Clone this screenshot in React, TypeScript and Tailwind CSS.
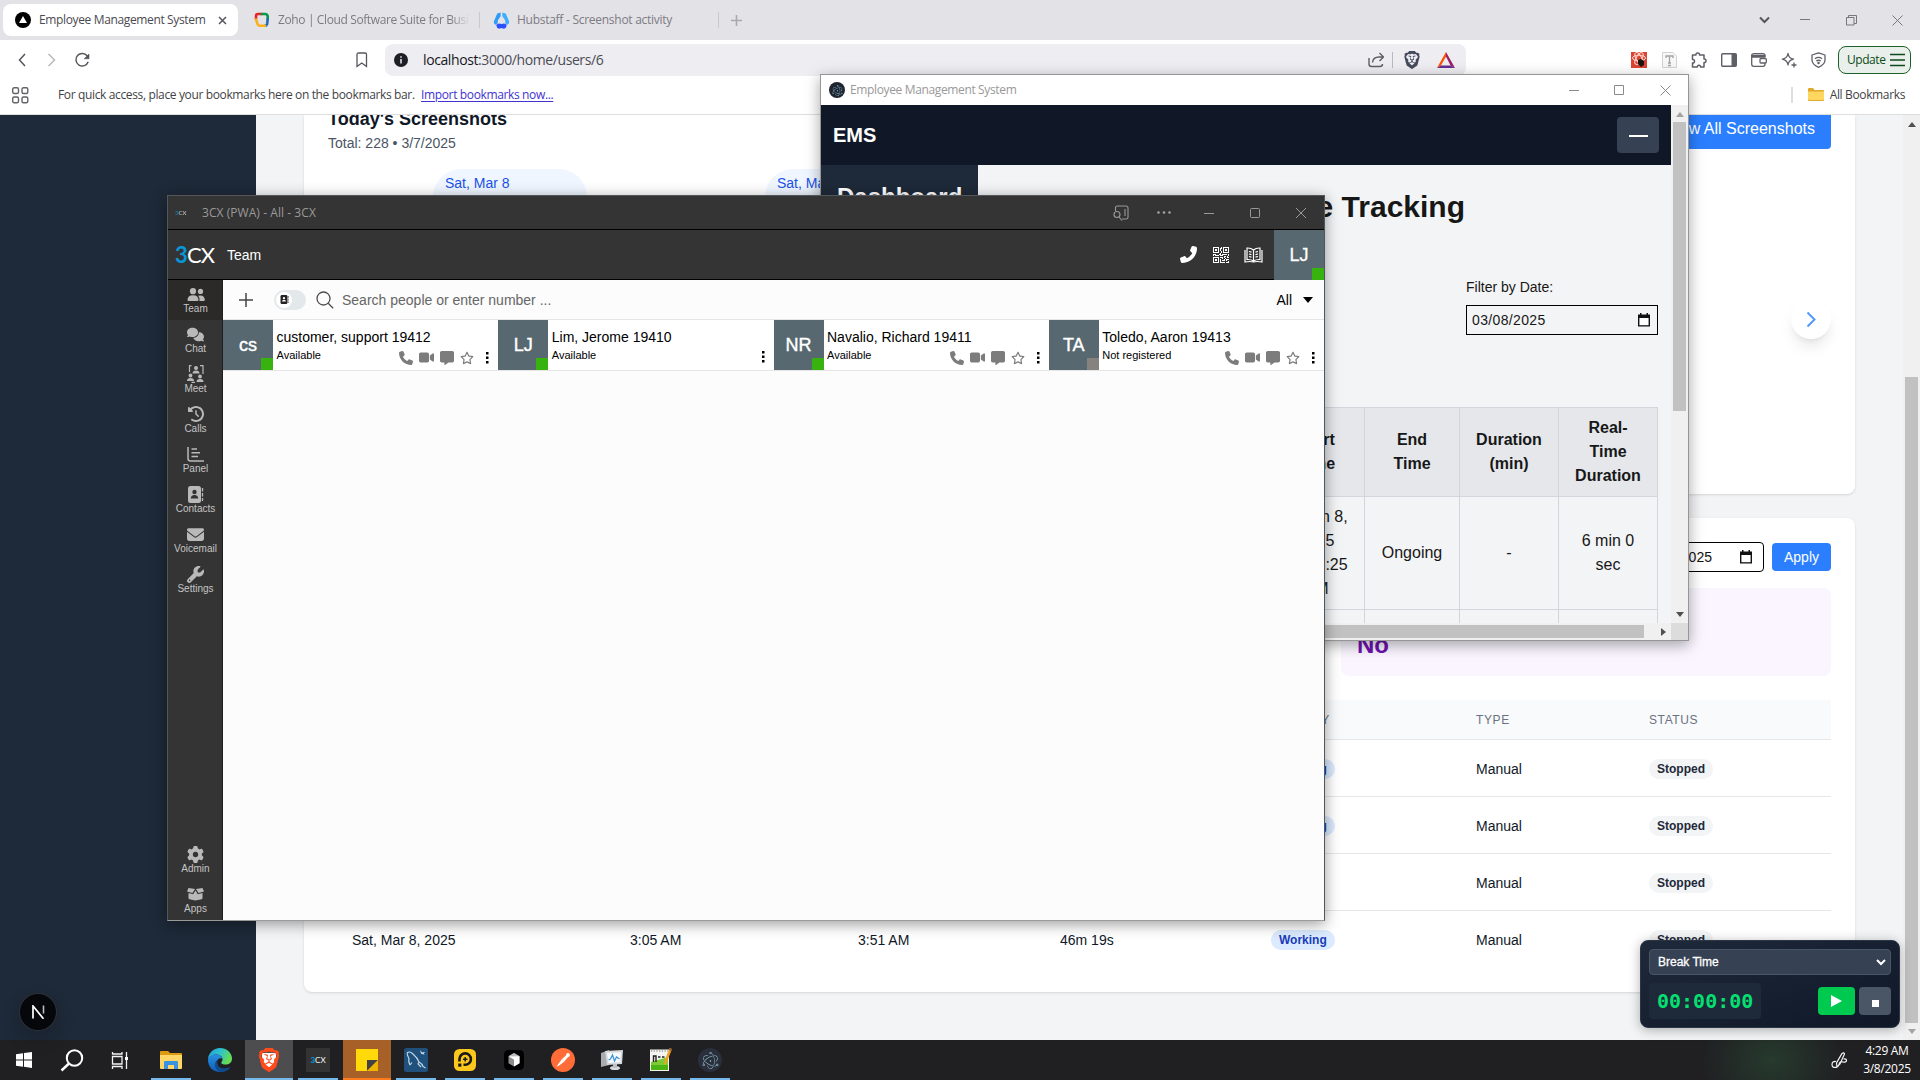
import React from "react";
import {
  FaComments, FaClockRotateLeft, FaEnvelope, FaWrench, FaGear,
  FaPhone, FaVideo, FaMessage, FaRegStar,
} from "react-icons/fa6";
import { BsQrCode } from "react-icons/bs";
import { SiBrave, SiElectron } from "react-icons/si";

const seg = "font-['Open_Sans','Noto_Sans',sans-serif]";

/* ---------- browser chrome ---------- */

function TabBar() {
  return (
    <div className={`flex h-10 shrink-0 items-center bg-[#e3e2e7] pl-[3px] text-[12px] ${seg}`}>
      <div className="flex h-8 w-[235px] items-center rounded-lg bg-white">
        <svg className="ml-3 shrink-0" width="16" height="16" viewBox="0 0 16 16">
          <circle cx="8" cy="8" r="8" fill="#000" />
          <path d="M8 4l4 7H4z" fill="#fff" />
        </svg>
        <span className="ml-2 w-[173px] whitespace-nowrap tracking-[-0.36px] text-[#4a4a50]">Employee Management System</span>
        <svg className="ml-1.5" width="9" height="9" viewBox="0 0 9 9" stroke="#55555b" strokeWidth="1.500">
          <path d="M1 1l7 7M8 1l-7 7" />
        </svg>
      </div>
      <div className="flex h-8 w-[241px] items-center pl-4">
        <svg className="shrink-0" width="16" height="16" viewBox="0 0 16 16" fill="none" strokeWidth="2.600" strokeLinecap="round">
          <path d="M2 7V4q0-2 2-2h4" stroke="#e42527" />
          <path d="M8 2h3q2.500 0 2.700 2.500V7" stroke="#089949" />
          <path d="M13.700 7l-.5 4.500q-.3 2-2.200 2.200" stroke="#226db4" />
          <path d="M11 13.800H6q-2 0-2.500-2L2 7.500" stroke="#f9b21d" />
        </svg>
        <span className="ml-2 w-[192px] overflow-hidden whitespace-nowrap tracking-[-0.38px] text-[#7c7b82] [mask-image:linear-gradient(90deg,#000_90%,transparent_100%)]">Zoho | Cloud Software Suite for Busi</span>
      </div>
      <div className="h-4 w-px bg-[#c9c8cd]" />
      <div className="flex h-8 w-[238px] items-center pl-[13px]">
        <svg width="17" height="17" viewBox="0 0 16 16">
          <path d="M7.200.5L4 1.500 1 8.500q-.8 2.500 1.500 3.500l2-1.500Q4 9 5 7l2.200-3z" fill="#2f9bf8" />
          <path d="M8.800.5L12 1.500l3 7q.8 2.500-1.500 3.500l-2-1.500Q12 9 11 7L8.800 4z" fill="#3fadff" />
          <path d="M3 12l2.500-1.200q2.500.9 5 0L13 12l-1 3-2 .8-2-.8-2 .8-2-.8z" fill="#2b50ff" />
        </svg>
        <span className="ml-[7px] whitespace-nowrap tracking-[-0.27px] text-[#7c7b82]">Hubstaff - Screenshot activity</span>
      </div>
      <div className="h-4 w-px bg-[#c9c8cd]" />
      <svg className="ml-[12px]" width="11" height="11" viewBox="0 0 11 11" stroke="#aaa9ae" strokeWidth="1.600">
        <path d="M5.500 0v11M0 5.500h11" />
      </svg>
      <div className="ml-auto flex items-center">
        <svg className="mr-[30px]" width="11" height="8" viewBox="0 0 11 8" fill="none" stroke="#55555b" strokeWidth="2">
          <path d="M1 1.500l4.500 4.500L10 1.500" />
        </svg>
        <svg className="mr-[36px]" width="10" height="10" stroke="#77767c"><path d="M0 4.500h10" /></svg>
        <svg className="mr-[35px]" width="11" height="11" fill="none" stroke="#77767c">
          <path d="M.5 2.500h7.500v7.500H.5zM2.500 2.500v-2h8v8h-2.500" />
        </svg>
        <svg className="mr-[17px]" width="11" height="11" stroke="#77767c"><path d="M.5.5l10 10M10.500.5l-10 10" /></svg>
      </div>
    </div>
  );
}

function AddressRow() {
  return (
    <div className={`flex h-10 shrink-0 items-center bg-white ${seg}`}>
      <svg className="ml-[18px]" width="8" height="14" fill="none" stroke="#55565c" strokeWidth="1.500"><path d="M7 1L1.500 7 7 13" /></svg>
      <svg className="ml-[21px]" width="9" height="14" fill="none" stroke="#b9b9be" strokeWidth="1.500"><path d="M1.500 1L7.500 7l-6 6" /></svg>
      <svg className="ml-[18px]" width="17" height="16" viewBox="0 0 17 16" fill="none" stroke="#55565c" strokeWidth="1.500">
        <path d="M13.500 4.200A6.300 6.300 0 1 0 14.200 9.800" />
        <path d="M15 2v4.800h-4.800z" fill="#55565c" strokeWidth=".6" />
      </svg>
      <svg className="ml-[265px]" width="12" height="16" fill="none" stroke="#55565c" strokeWidth="1.300">
        <path d="M1 2.500q0-1.500 1.500-1.500h6.500q1.500 0 1.500 1.500V14.500L5.750 11 1 14.500z" />
      </svg>
      <div className="ml-[17px] flex h-8 w-[1081px] items-center rounded-lg bg-[#eeedf2] pl-[9px] text-[14px]">
        <svg width="14" height="14" viewBox="0 0 14 14">
          <circle cx="7" cy="7" r="7" fill="#1d1e26" />
          <path d="M7 6v4.500M7 3.300v1.500" stroke="#eeedf2" strokeWidth="1.500" />
        </svg>
        <span className="ml-[15px] pb-px whitespace-nowrap tracking-[-0.4px] text-[#4b4c54]"><span className="text-[#17181d]">localhost</span>:3000/home/users/6</span>
        <svg className="ml-auto" width="16" height="16" viewBox="0 0 16 16" fill="none" stroke="#5d5e66" strokeWidth="1.400">
          <path d="M1 6v6q0 2.500 2.500 2.500h8.500q2.500 0 2.500-2.500M4.500 10.500Q5 5 11 5h4M11.500 1l4 4-4 4" />
        </svg>
        <div className="ml-2 h-4 w-px bg-[#b8b8bf]" />
        <SiBrave className="ml-[10px] text-[#454a5e]" size={18} />
        <svg className="ml-[16px] mr-[11px]" width="18" height="16" viewBox="0 0 18 16">
          <path d="M9 0L0 16l4-2.500L9 4.500z" fill="#ff5000" />
          <path d="M9 0l9 16-4.500-2.500L9 4.500z" fill="#9e1f63" />
          <path d="M0 16l4-2.500h9.500L18 16z" fill="#662d91" />
        </svg>
      </div>
      <div className="ml-auto flex items-center gap-[14px] pr-[9px] text-[#5f6067]">
        <svg className="mr-px ml-[-1px]" width="16" height="16" viewBox="0 0 16 16">
          <path d="M0 0h16v16H0z" fill="#db4433" />
          <g fill="none" stroke="#ffd9d2" strokeWidth="1"><ellipse cx="8" cy="6" rx="6.500" ry="2.800" /><ellipse cx="8" cy="6.500" rx="6.500" ry="2.800" transform="rotate(60 8 6.500)" /><ellipse cx="8" cy="6.500" rx="6.500" ry="2.800" transform="rotate(-60 8 6.500)" /></g>
          <path d="M7 8l3-1 3 2v4l-3 2-3-3z" fill="#1d1414" />
        </svg>
        <svg width="15" height="16" viewBox="0 0 15 16" fill="none" stroke="#d2d2d5">
          <path d="M.5.500h10.500l3.500 3.500v11.500H.5z" fill="#f7f7f7" />
          <path d="M4 6V4h7v2M7.500 4v7M6 11h3M6 13.500h3" stroke="#a2a2a6" strokeWidth="1.300" />
        </svg>
        <svg width="16" height="16" viewBox="0 0 16 16" fill="none" stroke="currentColor" strokeWidth="1.500" strokeLinejoin="round">
          <path d="M1.500 3H5q-.3-2 1.700-2T8.500 3H13v4q2-.2 2 1.700T13 10.500V15H9.500q.2-1.700-1.500-1.700T6.300 15H1.500v-4q2 .1 2-1.800T1.500 7.500z" />
        </svg>
        <svg width="16" height="14" viewBox="0 0 16 14"><rect x=".7" y=".7" width="14.600" height="12.600" rx="1" fill="none" stroke="currentColor" strokeWidth="1.400" /><path d="M10.500 1h4.500v12h-4.500z" fill="currentColor" /></svg>
        <svg width="16" height="14" viewBox="0 0 16 14" fill="none" stroke="currentColor" strokeWidth="1.300">
          <path d="M14 4V2.500Q14 .7 12 .7H3Q.7.700.7 2.500V11q0 2.300 2 2.300h9.300q2 0 2-2V10" />
          <path d="M.7 2.500h13v1.500H.7z" fill="currentColor" />
          <rect x="9" y="5.500" width="6.300" height="4.500" rx="1" />
        </svg>
        <svg width="16" height="16" viewBox="0 0 16 16" fill="none" stroke="currentColor" strokeWidth="1.300" strokeLinejoin="round">
          <path d="M7 1.500q.7 4.800 5.500 5.700Q7.700 8.100 7 13 6.200 8.100 1.300 7.200 6.200 6.300 7 1.500zM13 10.500v5M10.500 13h5" />
        </svg>
        <svg width="15" height="16" viewBox="0 0 15 16" fill="none" stroke="currentColor" strokeWidth="1.300" strokeLinejoin="round">
          <path d="M7.500.8L14 3v5q0 4.500-6.500 7.300Q1 12.500 1 8V3z" />
          <path d="M4 6.700q3.500-2.500 7 0M5.300 9q2.200-1.500 4.400 0" /><circle cx="7.500" cy="11" r=".6" />
        </svg>
        <div className="ml-[-2px] flex h-7 w-[73px] items-center rounded-lg border border-[#1c6128] bg-[#e9f0eb] pl-2 text-[12px] text-[#0c4a18]">
          <span className="w-[43px] tracking-[-0.45px]">Update</span>
          <svg width="15" height="14" stroke="#0c4a18" strokeWidth="1.600"><path d="M0 1.500h15M0 7h15M0 12.500h15" /></svg>
        </div>
      </div>
    </div>
  );
}

function BookmarksRow() {
  return (
    <div className={`flex h-[35px] shrink-0 items-center border-b border-[#dededf] bg-white pb-1 text-[12px] ${seg}`}>
      <svg className="ml-3 shrink-0" width="17" height="17" fill="none" stroke="#626267" strokeWidth="1.400">
        <rect x=".7" y=".7" width="5.800" height="5.800" rx="1.500" /><rect x="10" y=".7" width="5.800" height="5.800" rx="1.500" />
        <rect x=".7" y="10" width="5.800" height="5.800" rx="1.500" /><rect x="10" y="10" width="5.800" height="5.800" rx="1.500" />
      </svg>
      <span className="ml-[29px] w-[363px] whitespace-nowrap tracking-[-0.36px] text-[#3f3f45]">For quick access, place your bookmarks here on the bookmarks bar.</span>
      <span className="whitespace-nowrap tracking-[-0.36px] text-[#4133d1] underline underline-offset-2">Import bookmarks now...</span>
      <div className="ml-auto h-4 w-0.5 bg-[#dedee2]" />
      <svg className="ml-[15px]" width="16" height="14" viewBox="0 0 16 14">
        <path d="M0 1q0-1 1-1h4l1.500 2H15q1 0 1 1v9q0 1-1 1H1q-1 0-1-1z" fill="#e0a82c" />
        <path d="M0 3.500h16V11q0 1-1 1H1q-1 0-1-1z" fill="#ffd75e" />
      </svg>
      <span className="ml-1.5 mr-[15px] whitespace-nowrap tracking-[-0.36px] text-[#3f3f45]">All Bookmarks</span>
    </div>
  );
}

/* ---------- web page ---------- */

const COLS = "grid grid-cols-[278px_228px_202px_211px_205px_173px_206px]";

function Row({ start, end, dur, working }: { start: string; end: string; dur: string; working: boolean }) {
  return (
    <div className={`${COLS} h-[57px] items-center border-b border-gray-200 pt-0.5 text-sm text-[#101828] last:border-b-0 last:pt-px [&>div]:px-6`}>
      <div>Sat, Mar 8, 2025</div>
      <div>{start}</div>
      <div>{end}</div>
      <div>{dur}</div>
      <div className="flex">{working && <span className="rounded-full bg-[#dbeafe] px-2 text-xs leading-5 font-bold text-[#193cb8]">Working</span>}</div>
      <div>Manual</div>
      <div className="flex"><span className="rounded-full bg-gray-100 px-2 text-xs leading-5 font-bold text-[#1e2939]">Stopped</span></div>
    </div>
  );
}

function CalendarIcon() {
  return (
    <svg width="12" height="14" viewBox="0 0 12 14">
      <path d="M2 0h1.500v1.500h5V0H10v1.500h2V13.500H0V1.500h2z" fill="#111" />
      <path d="M1.400 5h9.200v7.200H1.400z" fill="#fff" />
    </svg>
  );
}

function DatePill() {
  return <div className="h-[120px] w-[154px] rounded-[28px] bg-[#eff6ff] px-3 pt-1 text-sm text-[#1a51e8]">Sat, Mar 8</div>;
}

function WebPage() {
  return (
    <div className="flex h-[925px] shrink-0 overflow-hidden">
      <div className="w-64 shrink-0 bg-[#1e2939]" />
      <div className="flex flex-1 flex-col gap-6 bg-[#f3f4f6] px-12">
        <div className="flex h-[379px] shrink-0 flex-col rounded-b-lg bg-white px-6 shadow-sm">
          <div className="flex h-[37px] items-start justify-between">
            <div className="mt-[-10px]">
              <div className="text-lg leading-7 font-bold text-[#101828]">Today's Screenshots</div>
              <div className="mt-px text-sm leading-[18px] text-[#4a5565]">Total: 228 • 3/7/2025</div>
            </div>
            <div className="mt-[-7px] flex h-[41px] items-center rounded bg-[#2b7fff] px-4 text-white">View All Screenshots</div>
          </div>
          <div className="mt-[17px] flex">
            <div className="flex gap-[178px] pl-[105px]"><DatePill /><DatePill /></div>
            <div className="mt-[130px] ml-auto flex size-10 items-center justify-center rounded-full bg-white shadow-lg">
              <svg width="11" height="17" fill="none" stroke="#5598fb" strokeWidth="2"><path d="M1.500 1.500l7 7-7 7" /></svg>
            </div>
          </div>
        </div>
        <div className="flex h-[474px] shrink-0 flex-col rounded-lg bg-white p-6 shadow-sm">
          <div className="flex h-[30px] items-center justify-end gap-2">
            <div className="flex h-[30px] w-[140px] items-center justify-end rounded border border-black pr-[11px] text-sm text-[#111]">
              <span className="mr-[28px]">03/08/2025</span>
              <CalendarIcon />
            </div>
            <div className="flex h-7 items-center rounded bg-[#2b7fff] px-3 text-sm text-white">Apply</div>
          </div>
          <div className="mt-4 mb-6 flex justify-end">
            <div className="h-[88px] w-[490px] rounded-lg bg-[#faf5ff] p-4 pt-[41px] text-2xl font-bold text-[#6e11b0]">No</div>
          </div>
          <div className={`${COLS} h-[41px] items-center border-b border-gray-200 bg-gray-50 text-xs tracking-wider text-[#6a7282] [&>div]:px-6`}>
            <div>DATE</div><div>START</div><div>END</div><div>DURATION</div><div>ACTIVITY</div><div>TYPE</div><div>STATUS</div>
          </div>
          <div>
            <Row start="4:23 AM" end="4:25 AM" dur="2m 0s" working />
            <Row start="4:10 AM" end="4:23 AM" dur="13m 0s" working />
            <Row start="3:51 AM" end="4:10 AM" dur="19m 0s" working={false} />
            <Row start="3:05 AM" end="3:51 AM" dur="46m 19s" working />
          </div>
        </div>
      </div>
      <div className="flex w-[17px] shrink-0 flex-col items-center bg-[#f0f0f0]">
        <svg className="mt-[7px]" width="8" height="5"><path d="M0 5l4-5 4 5z" fill="#505050" /></svg>
        <div className="mt-[250px] h-[646px] w-[13px] bg-[#c1c1c1]" />
        <svg className="mt-[6px]" width="8" height="5"><path d="M0 0l4 5 4-5z" fill="#a3a3a3" /></svg>
      </div>
    </div>
  );
}

/* ---------- EMS window ---------- */

function EmsWindow() {
  const th = "border border-[#d1d5dc] p-0 font-bold";
  const td = "border border-[#d1d5dc] p-0";
  return (
    <div className="absolute top-[74px] left-[820px] flex h-[567px] w-[869px] flex-col border border-[#969696] bg-[#f3f4f6] shadow-[0_4px_14px_rgba(0,0,0,0.35)]">
      <div className={`flex h-[30px] shrink-0 items-center bg-white text-[12px] text-[#999] ${seg}`}>
        <div className="ml-2 flex size-4 items-center justify-center rounded-full bg-[#1f2430]"><SiElectron size={11} className="text-[#9feaf9]" /></div>
        <span className="ml-[5px] whitespace-nowrap tracking-[-0.36px]">Employee Management System</span>
        <svg className="ml-auto" width="10" height="10" stroke="#8a8a8a"><path d="M0 5.500h10" /></svg>
        <svg className="ml-[35px]" width="10" height="10" fill="none" stroke="#8a8a8a"><path d="M.5.500h9v9h-9z" /></svg>
        <svg className="mr-[17px] ml-[36px]" width="11" height="11" stroke="#8a8a8a"><path d="M.5.5l10 10M10.500.5l-10 10" /></svg>
      </div>
      <div className="flex h-[518px]">
        <div className="flex w-[850px] flex-col overflow-hidden">
          <div className="flex h-[60px] shrink-0 items-center justify-between bg-[#101828] pr-3 pl-3 text-xl font-bold text-white">
            <span>EMS</span>
            <div className="flex h-9 w-[42px] items-center justify-center rounded bg-[#364153]"><div className="mt-0.5 h-0.5 w-[19px] bg-white" /></div>
          </div>
          <div className="flex h-[458px] overflow-hidden">
            <div className="w-[157px] shrink-0 bg-[#1e2939] pt-4 pl-4 text-2xl font-bold text-white">Dashboard</div>
            <div className="flex flex-1 flex-col items-end overflow-hidden pr-[13px] text-[#171717]">
              <div className="mt-[24px] mr-[193px] text-[30px] leading-9 font-bold">Time Tracking</div>
              <div className="mt-[52px] w-[192px] text-sm">Filter by Date:</div>
              <div className="mt-2 flex h-[30px] w-[192px] shrink-0 items-center justify-between border border-black pr-[7px] pl-[5px] text-sm">
                <span className="tracking-[0.35px]">03/08/2025</span><CalendarIcon />
              </div>
              <table className="mt-[72px] w-[390px] shrink-0 table-fixed border-collapse text-center text-base leading-6">
                <colgroup><col className="w-[96px]" /><col className="w-[95px]" /><col className="w-[99px]" /><col className="w-[99px]" /></colgroup>
                <thead>
                  <tr className="h-[89px] bg-[#e5e7eb]">
                    <th className={th}>Start<br />Time</th><th className={th}>End<br />Time</th><th className={th}>Duration<br />(min)</th><th className={th}>Real-<br />Time<br />Duration</th>
                  </tr>
                </thead>
                <tbody>
                  <tr className="h-[113px]">
                    <td className={td}>March 8,<br />2025<br />04:23:25<br />AM</td><td className={td}>Ongoing</td><td className={td}>-</td><td className={td}>6 min 0<br />sec</td>
                  </tr>
                  <tr className="h-[113px]"><td className={td} /><td className={td} /><td className={td} /><td className={td} /></tr>
                </tbody>
              </table>
            </div>
          </div>
        </div>
        <div className="flex w-[17px] flex-col items-center bg-[#f0f0f0]">
          <svg className="mt-[7px]" width="8" height="5"><path d="M0 5l4-5 4 5z" fill="#a3a3a3" /></svg>
          <div className="mt-[5px] h-[289px] w-[13px] bg-[#c1c1c1]" />
          <svg className="mt-auto mb-[6px]" width="8" height="5"><path d="M0 0l4 5 4-5z" fill="#505050" /></svg>
        </div>
      </div>
      <div className="flex h-[17px] items-center bg-[#f0f0f0]">
        <div className="ml-[17px] h-[13px] w-[806px] bg-[#c1c1c1]" />
        <svg className="ml-[17px]" width="5" height="8"><path d="M0 0l5 4-5 4z" fill="#505050" /></svg>
        <div className="ml-auto h-[17px] w-[17px] bg-[#dcdcdc]" />
      </div>
    </div>
  );
}

/* ---------- 3CX window ---------- */

function CxLogo({ className }: { className: string }) {
  return (
    <span className={`font-['Lato',sans-serif] whitespace-nowrap text-white ${className}`}>
      <b className="text-[#0896d7]">3</b>CX
    </span>
  );
}

function TeamIcon() {
  return (
    <svg width="18" height="13" viewBox="0 0 18 13" fill="#b9b9b9">
      <circle cx="6" cy="3.200" r="3.100" /><circle cx="13.500" cy="3.400" r="2.600" />
      <path d="M.5 12q0-4.700 5.500-4.700t5.500 4.700q0 1-1 1H1.500q-1 0-1-1zM12.500 13q.6-3.300-1.300-5.300 6.300-1.400 6.600 4.300 0 1-1 1z" />
    </svg>
  );
}
function MeetIcon() {
  return (
    <svg width="17" height="18" viewBox="0 0 17 18" fill="#b9b9b9">
      <circle cx="9" cy="3" r="2" /><path d="M5.500 8.500q0-3 3.500-3t3.500 3z" />
      <circle cx="3.500" cy="10.500" r="1.900" /><path d="M0 16q0-3 3.500-3T7 16z" />
      <circle cx="13" cy="11.500" r="1.900" /><path d="M9.500 17q0-3 3.500-3t3.500 3z" />
      <path d="M4.500.7H2.500V7M13 .7h3V9M4.500 17.300h3.500" fill="none" stroke="#b9b9b9" strokeWidth="1.200" />
    </svg>
  );
}
function PanelIcon() {
  return (
    <svg width="17" height="15" viewBox="0 0 17 15" fill="none" stroke="#b9b9b9" strokeWidth="1.500">
      <path d="M1 0v11.500q0 2.500 2.500 2.500H17M4.500 2h5.500M4.500 5.700h8.500M4.500 9.400h6.500" />
    </svg>
  );
}
function ContactsIcon({ color = "#b9b9b9", dark = "#333", size = 17 }: { color?: string; dark?: string; size?: number }) {
  return (
    <svg width={size} height={size} viewBox="0 0 17 17">
      <rect x="1" width="13" height="17" rx="2.500" fill={color} />
      <path d="M15.500 2v3.500M15.500 7v3.500M15.500 12v3" stroke={color} strokeWidth="1.300" />
      <circle cx="7.500" cy="6" r="2.200" fill={dark} /><path d="M3.800 12.500q0-3.500 3.700-3.500t3.700 3.500z" fill={dark} />
    </svg>
  );
}
function AppsIcon() {
  return (
    <svg width="17" height="14" viewBox="0 0 17 14" fill="#b9b9b9">
      <path d="M1.500 1L8 2 5.500 6 0 4.500zM15.500 1L9 2l2.500 4L17 4.500z" />
      <path d="M1.500 6l4.700 1.200L8.500 3.500l2.300 3.700L15.500 6v5q0 1-1 1.300L8.500 13.500 2.500 12.300q-1-.3-1-1.300z" />
    </svg>
  );
}

function NavItem({ icon, label, active }: { icon: React.ReactNode; label: string; active?: boolean }) {
  return (
    <div className={`flex h-10 flex-col items-center pl-px text-[#b9b9b9] ${active ? "bg-[#2b2a29]" : ""}`}>
      <div className="mt-[5px] flex h-[18px] items-center">{icon}</div>
      <div className="text-[10px] leading-3 text-[#c4c4c4]">{label}</div>
    </div>
  );
}

function Person({ initials, name, status, icons, grey }: { initials: string; name: string; status: string; icons: boolean; grey?: boolean }) {
  return (
    <div className="flex h-[50px] flex-1 bg-white">
      <div className="relative flex size-[50px] items-center justify-center bg-[#586870] text-[18px] text-white [-webkit-text-stroke:0.4px_white]">
        {initials}
        <div className={`absolute right-0 bottom-0 size-3 ${grey ? "bg-[#858280]" : "bg-[#38b20f]"}`} />
      </div>
      <div className="flex flex-1 flex-col pl-[3.5px] text-black">
        <div className="mt-[7px] text-sm leading-5">{name}</div>
        <div className="flex items-start justify-between text-[11px] leading-4">
          <span>{status}</span>
          <div className="flex items-center gap-[6px] pt-[3px] pr-[9px] text-[#7c7c7c]">
            {icons && (
              <>
                <FaPhone size={14} /><FaVideo size={15} /><FaMessage size={14} /><FaRegStar size={14} className="mr-[5px]" />
              </>
            )}
            <svg width="4" height="13" fill="#000"><path d="M1 1h2.500v2.500H1zM1 5.500h2.500V8H1zM1 10h2.500v2.500H1z" /></svg>
          </div>
        </div>
      </div>
    </div>
  );
}

function CxWindow() {
  return (
    <div className="absolute top-[195px] left-[167px] flex h-[726px] w-[1158px] flex-col border border-[#53575b] border-b-[#9a9c9a] bg-[#fcfcfc] shadow-[0_3px_14px_rgba(0,0,0,0.4)]">
      <div className={`flex h-[34px] shrink-0 items-center border-b border-black bg-[#343434] text-[12px] text-[#9a9a9a] ${seg}`}>
        <CxLogo className="ml-[7px] w-[27px] text-[6px] opacity-70" />
        <span className="whitespace-nowrap tracking-[0.06px]">3CX (PWA) - All - 3CX</span>
        <svg className="ml-auto" width="16" height="16" viewBox="0 0 16 16" fill="none" stroke="#999" strokeWidth="1.100">
          <path d="M2.500 6V3q0-2 2-2H13q2 0 2 2v9.500q0 1.500-2 1.500H9M12 4v7" /><circle cx="4" cy="9.500" r="3" /><path d="M6 12l3 3.500" />
        </svg>
        <svg className="ml-[28px]" width="14" height="3" fill="#aaa"><circle cx="1.500" cy="1.500" r="1.200" /><circle cx="7" cy="1.500" r="1.200" /><circle cx="12.500" cy="1.500" r="1.200" /></svg>
        <svg className="ml-[33px]" width="10" height="10" stroke="#999"><path d="M0 5.500h10" /></svg>
        <svg className="ml-[36px]" width="10" height="10" fill="none" stroke="#999"><rect x=".5" y=".5" width="9" height="9" rx="1" /></svg>
        <svg className="mr-[18px] ml-[36px]" width="10" height="10" stroke="#999"><path d="M0 0l10 10M10 0L0 10" /></svg>
      </div>
      <div className="flex h-[50px] shrink-0 items-center border-b border-black bg-[#343434] text-white">
        <CxLogo className="ml-[7px] w-[52px] text-[22px] tracking-[-0.9px]" />
        <span className="text-sm">Team</span>
        <FaPhone className="ml-auto -scale-x-100" size={17} />
        <BsQrCode className="ml-[16px]" size={16} />
        <svg className="mr-[11px] ml-[15px]" width="19" height="16" viewBox="0 0 19 16" fill="none" stroke="#fff" strokeWidth="1.200">
          <path d="M9.500 3Q7 .8 3 1v11.500q4-.2 6.500 1.500 2.500-1.700 6.500-1.500V1q-4-.2-6.500 2zM9.500 3v11M1 3v12q5-1 8.500 0 3.500-1 8.500 0V3M5 4.500l2.500.7M5 7l2.500.7M5 9.500l2.500.7M14 4.500l-2.500.7M14 7l-2.500.7M14 9.500l-2.500.7" />
        </svg>
        <div className="relative flex h-[50px] w-[50px] items-center justify-center self-start bg-[#586870] text-[18px] [-webkit-text-stroke:0.3px_white]">
          LJ<div className="absolute right-0 bottom-0 size-3 bg-[#38b20f]" />
        </div>
      </div>
      <div className="flex flex-1">
        <div className="flex w-[55px] flex-col border-r border-[#1f1f1f] bg-[#343434]">
          <NavItem active icon={<TeamIcon />} label="Team" />
          <NavItem icon={<FaComments size={17} />} label="Chat" />
          <NavItem icon={<MeetIcon />} label="Meet" />
          <NavItem icon={<FaClockRotateLeft size={16} />} label="Calls" />
          <NavItem icon={<PanelIcon />} label="Panel" />
          <NavItem icon={<ContactsIcon />} label="Contacts" />
          <NavItem icon={<FaEnvelope size={17} />} label="Voicemail" />
          <NavItem icon={<FaWrench size={17} />} label="Settings" />
          <div className="mt-auto" />
          <NavItem icon={<FaGear size={17} />} label="Admin" />
          <NavItem icon={<AppsIcon />} label="Apps" />
        </div>
        <div className="flex flex-1 flex-col">
          <div className="flex h-10 items-center border-b border-[#e6e6e6] pr-[11px] text-sm">
            <svg className="ml-[16px]" width="14" height="14" stroke="#444" strokeWidth="1.500"><path d="M7 0v14M0 7h14" /></svg>
            <div className="ml-[21px] flex h-5 w-8 items-center rounded-full bg-[#e3e8ea] pl-0.5">
              <div className="flex size-4 items-center justify-center rounded-full bg-white pl-px"><ContactsIcon size={9} color="#222" dark="#fff" /></div>
            </div>
            <svg className="ml-[10px]" width="18" height="18" fill="none" stroke="#4e4e4e" strokeWidth="1.300"><circle cx="7.500" cy="7.500" r="6.500" /><path d="M12.200 12.200l5 5" /></svg>
            <span className="ml-[8px] text-[#666]">Search people or enter number ...</span>
            <span className="ml-auto text-black">All</span>
            <svg className="ml-[11px]" width="10" height="6"><path d="M0 0h10L5 6z" fill="#000" /></svg>
          </div>
          <div className="flex border-b border-[#e6e6e6]">
            <Person initials="cs" name="customer, support 19412" status="Available" icons />
            <Person initials="LJ" name="Lim, Jerome 19410" status="Available" icons={false} />
            <Person initials="NR" name="Navalio, Richard 19411" status="Available" icons />
            <Person initials="TA" name="Toledo, Aaron 19413" status="Not registered" icons grey />
          </div>
        </div>
      </div>
    </div>
  );
}

/* ---------- timer and dev badge ---------- */

function TimerWidget() {
  return (
    <div className="absolute top-[940px] left-[1640px] flex h-[88px] w-[260px] flex-col rounded-lg border border-[#2a3546] bg-linear-to-br from-[#1e2939] to-[#101828] p-2 text-white shadow-[0_2px_12px_rgba(0,0,0,0.3)]">
      <div className="flex h-[26px] items-center justify-between rounded border border-[#4a5565] bg-[#364153] pr-1 pl-2 text-xs [-webkit-text-stroke:0.3px_white]">
        Break Time
        <svg width="10" height="7" fill="none" stroke="#fff" strokeWidth="2"><path d="M1 1l4 4 4-4" /></svg>
      </div>
      <div className="mt-2 flex items-center">
        <div className="flex h-9 w-[112px] items-center rounded bg-[#1e2939] pl-2 font-['DejaVu_Sans_Mono',monospace] text-[20px] font-bold text-[#05df72]">00:00:00</div>
        <div className="ml-auto flex h-7 w-[37px] items-center justify-center rounded bg-[#00c950]"><svg width="11" height="12"><path d="M0 0l11 6-11 6z" fill="#fff" /></svg></div>
        <div className="ml-1 flex h-7 w-8 items-center justify-center rounded bg-[#4a5565]"><div className="mt-1 size-[7px] bg-white" /></div>
      </div>
    </div>
  );
}

function DevBadge() {
  return (
    <div className="absolute top-[994px] left-[20px] flex size-9 items-center justify-center rounded-full bg-[#05070a] shadow-[0_0_0_1px_#2f3237,0_8px_20px_rgba(0,0,0,0.2)]">
      <svg width="13" height="14" viewBox="0 0 13 14" fill="none">
        <path d="M1 13.500V1l10.500 12.800" stroke="#fff" strokeWidth="1.700" /><path d="M11.500 .5v8" stroke="#bbb" strokeWidth="1.600" />
      </svg>
    </div>
  );
}

/* ---------- taskbar ---------- */

const icons: Record<string, React.ReactNode> = {
  explorer: (
    <svg width="22" height="18" viewBox="0 0 22 18">
      <path d="M0 1q0-1 1-1h7l2 2h11q1 0 1 1v14H0z" fill="#dc9a13" /><path d="M0 4h22v13q0 1-1 1H1q-1 0-1-1z" fill="#ffd667" />
      <path d="M4 18v-7q0-1 1-1h12q1 0 1 1v7h-4v-4H8v4z" fill="#3a93dd" />
    </svg>
  ),
  edge: (
    <svg width="24" height="24" viewBox="0 0 24 24">
      <defs>
        <linearGradient id="eg" x1="0" y1="0" x2="1" y2=".4"><stop offset="0" stopColor="#1f9fe0" /><stop offset=".55" stopColor="#2fc3c8" /><stop offset="1" stopColor="#66dd55" /></linearGradient>
        <linearGradient id="eb" x1="0" y1="0" x2="0" y2="1"><stop offset="0" stopColor="#2a8fe0" /><stop offset="1" stopColor="#0c5fb8" /></linearGradient>
      </defs>
      <path d="M0 12C0 5 5.500 0 12 0s12 4.800 12 10.500c0 4-3 6-6.500 6-2.500 0-4.300-.9-4.300-1.800 0-.7 1.300-1.200 1.300-3.500C14.500 8 11 6.500 8 6.500 4 6.500.8 9 0 12z" fill="url(#eg)" />
      <path d="M0 12c.5-3.500 4-5.500 7.500-5.500 4 0 6.800 2 7 4.500-1-1.500-5.500-1.500-5.500 3.500 0 4.500 4.500 9 11.500 6C18 23 15 24 12 24 5 24 0 19 0 12z" fill="url(#eb)" />
      <path d="M9 14.500c0 4.500 5 7.500 12.500 4.800.6-.3.900.2.600.7C20 22.700 16.500 24 13 24 8.500 23 6.500 19 7 16c.2-1.800 1.200-3.600 2.500-4.300C9.100 12.500 9 13.500 9 14.500z" fill="#114a8b" />
    </svg>
  ),
  brave: (
    <div className="relative flex size-6 items-center justify-center">
      <div className="absolute size-[14px] bg-white" />
      <SiBrave className="relative text-[#ff4a1c]" size={24} />
    </div>
  ),
  cx: <div className="flex size-6 items-center justify-center bg-[#333]"><CxLogo className="text-[8px]" /></div>,
  note: <svg width="22" height="22"><path d="M0 0h22v11L11 22H0z" fill="#ffd90a" /><path d="M11 22V11h11z" fill="#424242" /><path d="M11 22L22 11v11z" fill="#f0b400" /></svg>,
  mysql: (
    <svg width="24" height="24" viewBox="0 0 24 24">
      <rect width="24" height="24" rx="2.500" fill="#20517d" />
      <path d="M6 17Q4 13 5 10.500 2.500 6 3.500 4.500 6 3 9 6q4.500 4 6 8 3 1.500 4 4.500l2.500 1.500M6 17l2-2.500M15 14l-1 2 3 3" fill="none" stroke="#c6dbe9" strokeWidth="1.100" />
      <path d="M16 2l2 2.500L21 4l-1.500 2 1.500 1-4-1.500z" fill="#d8e6f0" />
    </svg>
  ),
  yellow: (
    <svg width="22" height="22" viewBox="0 0 22 22">
      <rect width="22" height="22" rx="5.500" fill="#fcc81e" />
      <path d="M5.500 12.500v-2.500a5.700 5.700 0 1 1 5.700 5.800H9.500" fill="none" stroke="#1c1a18" strokeWidth="2.600" /><path d="M4.200 14.500h3.200v3.200H4.200z" fill="#1c1a18" />
      <path d="M11.200 8v4.500M9 10.200h4.500" stroke="#1c1a18" strokeWidth="1.500" />
    </svg>
  ),
  cursor: (
    <svg width="20" height="20" viewBox="0 0 20 20">
      <rect width="20" height="20" rx="4.500" fill="#000" />
      <path d="M10 3l5.500 3.200v7L10 16.500 4.500 13.200v-7z" fill="#8d8d8d" /><path d="M4.500 6.200L10 3l5.500 3.200L10 9.500z" fill="#bbb" /><path d="M15.500 6.200v7L10 16.500V9.500L5 6.500z" fill="#fff" />
    </svg>
  ),
  postman: (
    <svg width="24" height="24" viewBox="0 0 24 24">
      <circle cx="12" cy="12" r="12" fill="#ff6c37" />
      <path d="M5.500 18.500l5.500-7.500 2.500 2.500-6 4.500z" fill="#fff" /><path d="M11 11l4.500-4 1.800 1.800-4 4.700z" fill="#fff" /><circle cx="17" cy="7" r="1.900" fill="#fff" />
    </svg>
  ),
  monitor: (
    <svg width="24" height="22" viewBox="0 0 24 22">
      <path d="M1 4l8-3v15l-8 2z" fill="#a9adb0" /><path d="M5 2l18-1-1 14-15 1z" fill="#d5d8da" /><path d="M7 4l14-.8-.7 10L8.500 14z" fill="#f7fbff" />
      <path d="M8.500 11l2-1 2-4 2 6 2-4 3 2" stroke="#3e95d8" fill="none" strokeWidth="1.300" /><ellipse cx="15" cy="19" rx="5" ry="2" fill="#d9dbdc" /><path d="M13 15h4v4h-4z" fill="#bfc2c4" />
    </svg>
  ),
  editor: (
    <svg width="24" height="24" viewBox="0 0 24 24">
      <path d="M1 1.500h19V23H1z" fill="#f4f4f0" /><path d="M2 14L19 9v13H2z" fill="#7ccb35" /><path d="M2 17h17v5H2z" fill="#4bb414" /><path d="M2 3h17" stroke="#999" strokeDasharray="1.200 1.500" strokeWidth="1.500" />
      <path d="M4.500 14V8h2.500v6M9 9h2.500M13 9h2.500" stroke="#222" strokeWidth="1.400" fill="none" /><path d="M20.500 0l2.500 1-5.500 14-2.500 2 .2-3z" fill="#f0a024" /><path d="M20.500 0L23 1l-.8 2-2.400-1z" fill="#8d5a34" />
    </svg>
  ),
  electron: <div className="flex size-6 items-center justify-center rounded-full bg-[#2b2e3b]"><SiElectron size={17} className="text-[#9fd6e3]" /></div>,
};

function Taskbar() {
  const apps: [string, string][] = [
    ["explorer", ""], ["edge", "none"], ["brave", "active"], ["cx", ""], ["note", "note"], ["mysql", ""],
    ["yellow", ""], ["cursor", ""], ["postman", ""], ["monitor", ""], ["editor", ""], ["electron", ""],
  ];
  return (
    <div className="flex h-10 shrink-0 items-center bg-[#202023] bg-[radial-gradient(ellipse_70px_60px_at_1772px_20px,#263a2d,transparent)]">
      <svg className="ml-4" width="16" height="16" fill="#fff"><path d="M0 2.200l7-1v6.300H0zM8 1l8-1v7.500H8zM0 8.500h7v6.300l-7-1zM8 8.500h8V16l-8-1.200z" /></svg>
      <svg className="ml-[28px]" width="24" height="24" fill="none" stroke="#fff" strokeWidth="2"><circle cx="14.500" cy="10" r="7.700" /><path d="M9 15.500L1.500 22.500" strokeWidth="2.400" /></svg>
      <svg className="ml-[27px]" width="18" height="17" fill="none" stroke="#f2f2f2" strokeWidth="1.300">
        <path d="M1.500 4.500h9.500v7.500H1.500zM1.500 0v2h9.500V0M1.500 17v-2.500h9.500V17M15.500 0v17" /><path d="M14 5h3v3h-3z" fill="#fff" stroke="none" />
      </svg>
      <div className="ml-[18px] flex">
        {apps.map(([k, s]) => (
          <div key={k} className={`mr-px flex h-10 w-12 shrink-0 flex-col items-center ${s === "active" ? "bg-[#4d4d50]" : s === "note" ? "bg-[#a86029]" : ""}`}>
            <div className="flex h-[38px] items-center pt-0.5">{icons[k]}</div>
            <div className={`h-0.5 ${s === "active" ? "w-12 bg-[#76b9ed]" : s === "note" ? "w-12 bg-[#ff7a1a]" : s === "none" ? "" : "w-10 bg-[#76b9ed]"}`} />
          </div>
        ))}
      </div>
      <svg className="ml-auto" width="17" height="17" viewBox="0 0 17 17" fill="none" stroke="#f4f4f4" strokeWidth="1.200">
        <path d="M6 15L5.500 11 11 1.500q2-1.500 2.500.5L9 12zM5 9.500q-4-.5-4 3t4 2.800q3-.8 3.500-4.300 1-2 3-1 4 .5 4-1.500t-3-1.500" />
      </svg>
      <div className={`mr-2 ml-[14px] w-[50px] text-center text-[12px] leading-[18px] tracking-[-0.3px] whitespace-nowrap text-white ${seg}`}>4:29 AM<br />3/8/2025</div>
    </div>
  );
}

export default function App() {
  return (
    <div className="relative flex h-[1080px] w-[1920px] flex-col overflow-hidden bg-white font-['Liberation_Sans',Arial,sans-serif]">
      <TabBar />
      <AddressRow />
      <BookmarksRow />
      <WebPage />
      <Taskbar />
      <EmsWindow />
      <CxWindow />
      <TimerWidget />
      <DevBadge />
    </div>
  );
}
